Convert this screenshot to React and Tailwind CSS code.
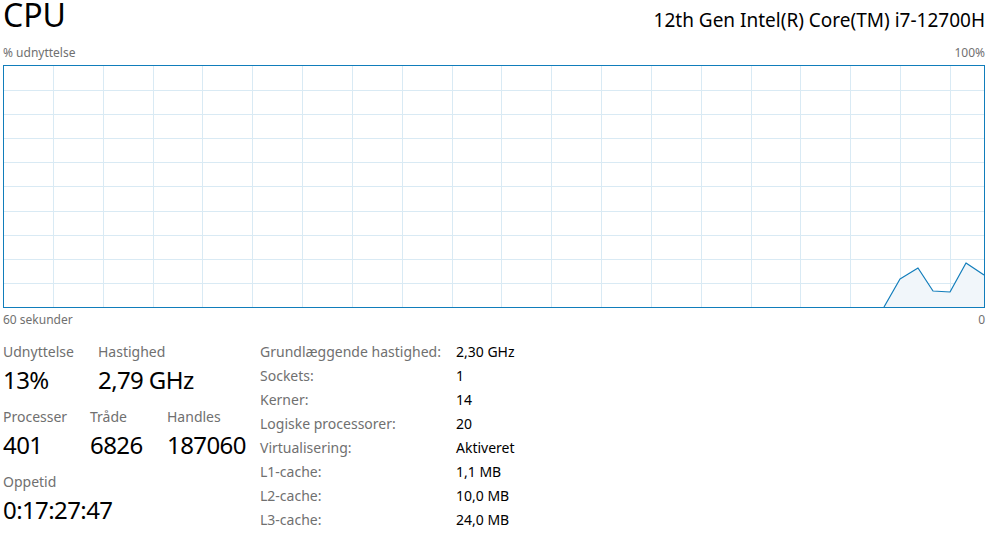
import React from 'react'

const font = { fontFamily: '"Noto Sans", "Open Sans", sans-serif' }

// lodrette og vandrette gitterlinjer i grafen
const vLines = Array.from({ length: 19 }, (_, i) => Math.round(49 + i * 49.83) + 0.5)
const hLines = Array.from({ length: 9 }, (_, i) => Math.round(23.5 + i * 24.2) + 0.5)

// CPU-kurve (indre koordinater, 980 x 241)
const points = [
  [880, 241],
  [896, 213],
  [914, 202],
  [929, 225],
  [946, 226],
  [962, 197],
  [980, 209],
]

function CpuGraph() {
  const line = points.map(([x, y]) => `${x},${y}`).join(' ')
  const area = `${line} 980,241 880,241`
  return (
    <div className="h-[243px] border border-[#117dbb] bg-white">
      <svg width="980" height="241" viewBox="0 0 980 241" className="block">
        {vLines.map((x) => (
          <line key={'v' + x} x1={x} y1="0" x2={x} y2="241" stroke="#d9eaf4" strokeWidth="1" />
        ))}
        {hLines.map((y) => (
          <line key={'h' + y} x1="0" y1={y} x2="980" y2={y} stroke="#d9eaf4" strokeWidth="1" />
        ))}
        <polygon points={area} fill="#f1f6fa" />
        <polyline points={line} fill="none" stroke="#117dbb" strokeWidth="1.2" strokeLinejoin="round" />
      </svg>
    </div>
  )
}

function Stat({ label, value, className = '' }) {
  return (
    <div className={className}>
      <div className="text-[14px] leading-[24px] text-[#707070]">{label}</div>
      <div className="text-[24px] leading-[32px] tracking-[-0.6px] text-black">{value}</div>
    </div>
  )
}

const details = [
  ['Grundlæggende hastighed:', '2,30 GHz'],
  ['Sockets:', '1'],
  ['Kerner:', '14'],
  ['Logiske processorer:', '20'],
  ['Virtualisering:', 'Aktiveret'],
  ['L1-cache:', '1,1 MB'],
  ['L2-cache:', '10,0 MB'],
  ['L3-cache:', '24,0 MB'],
]

export default function App() {
  return (
    <div className="w-[990px] h-[547px] bg-white pl-[3px] pr-[5px] overflow-hidden" style={font}>
      {/* overskrift */}
      <div className="h-[32px] flex items-baseline justify-between">
        <div className="text-[32px] leading-[30px] text-black">CPU</div>
        <div className="text-[19px] leading-[29px] text-black">12th Gen Intel(R) Core(TM) i7-12700H</div>
      </div>

      <div className="mt-[13px] h-[16px] flex justify-between text-[12px] leading-[16px] text-[#707070]">
        <span>% udnyttelse</span>
        <span>100%</span>
      </div>

      <div className="mt-[4px]">
        <CpuGraph />
      </div>

      <div className="mt-[4px] h-[16px] flex justify-between text-[12px] leading-[16px] text-[#707070]">
        <span>60 sekunder</span>
        <span>0</span>
      </div>

      {/* statistik */}
      <div className="mt-[12px] flex">
        <div className="w-[257px]">
          <div className="flex">
            <Stat label="Udnyttelse" value="13%" className="w-[95px]" />
            <Stat label="Hastighed" value="2,79 GHz" />
          </div>
          <div className="flex mt-[9px]">
            <Stat label="Processer" value="401" className="w-[87px]" />
            <Stat label="Tråde" value="6826" className="w-[77px]" />
            <Stat label="Handles" value="187060" />
          </div>
          <Stat label="Oppetid" value="0:17:27:47" className="mt-[9px]" />
        </div>

        <div className="grid grid-cols-[196px_auto] text-[14px] leading-[24px]">
          {details.map(([label, value]) => (
            <React.Fragment key={label}>
              <div className="text-[#707070]">{label}</div>
              <div className="text-black">{value}</div>
            </React.Fragment>
          ))}
        </div>
      </div>
    </div>
  )
}
